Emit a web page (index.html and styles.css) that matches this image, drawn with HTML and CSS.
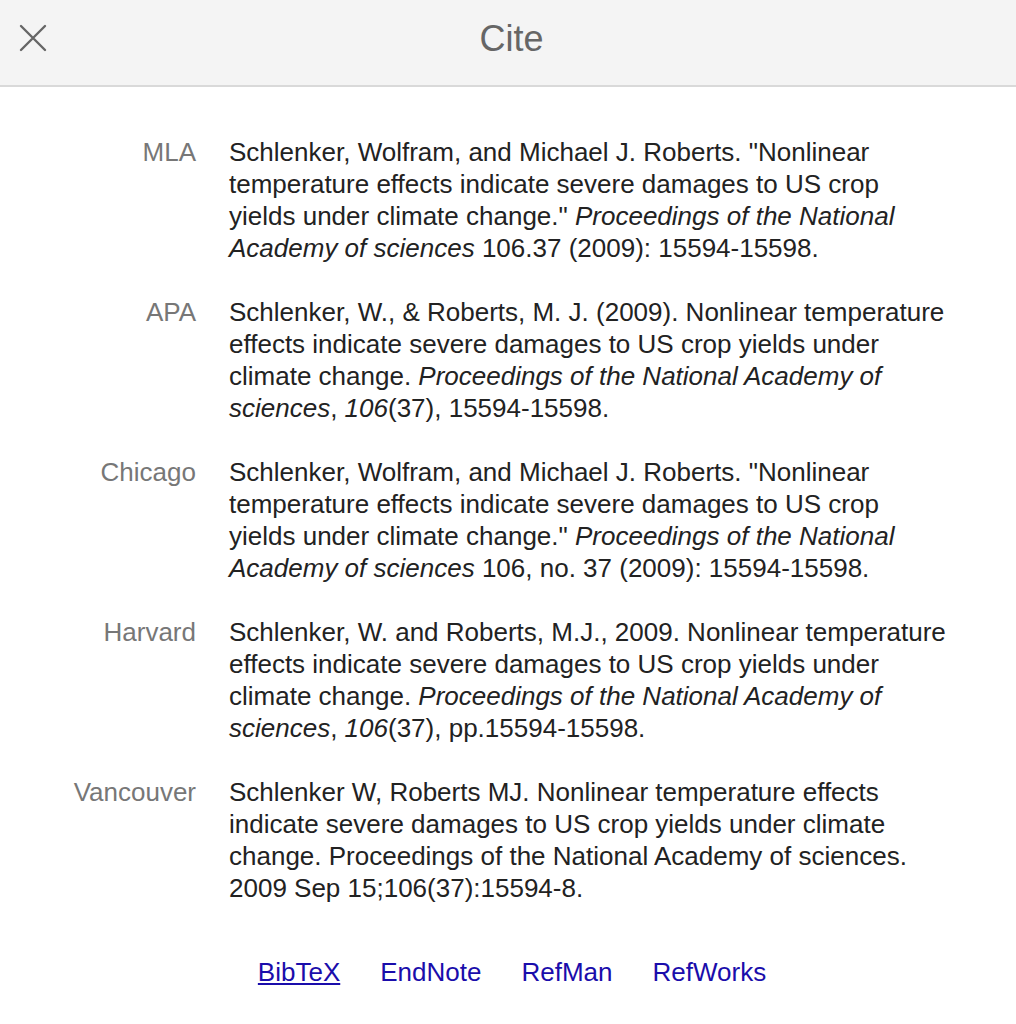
FILE: index.html
```html
<!DOCTYPE html>
<html>
<head>
<meta charset="utf-8">
<link rel="stylesheet" href="styles.css">
</head>
<body>
<div class="dialog">
  <header class="head">
    <button class="close" aria-label="Close">
      <svg width="28" height="28" viewBox="0 0 28 28"><path d="M2 2 L26 26 M26 2 L2 26" stroke="#666" stroke-width="2.4" stroke-linecap="round" fill="none"/></svg>
    </button>
    <h1 class="title">Cite</h1>
  </header>
  <div class="body">
    <div class="cites">
      <div class="lbl">MLA</div>
      <div class="txt">Schlenker, Wolfram, and Michael J. Roberts. "Nonlinear temperature effects indicate severe damages to US crop yields under climate change." <i>Proceedings of the National Academy of sciences</i> 106.37 (2009): 15594-15598.</div>
      <div class="lbl">APA</div>
      <div class="txt">Schlenker, W., &amp; Roberts, M. J. (2009). Nonlinear temperature effects indicate severe damages to US crop yields under climate change. <i>Proceedings of the National Academy of sciences</i>, <i>106</i>(37), 15594-15598.</div>
      <div class="lbl">Chicago</div>
      <div class="txt">Schlenker, Wolfram, and Michael J. Roberts. "Nonlinear temperature effects indicate severe damages to US crop yields under climate change." <i>Proceedings of the National Academy of sciences</i> 106, no. 37 (2009): 15594-15598.</div>
      <div class="lbl">Harvard</div>
      <div class="txt">Schlenker, W. and Roberts, M.J., 2009. Nonlinear temperature effects indicate severe damages to US crop yields under climate change. <i>Proceedings of the National Academy of sciences</i>, <i>106</i>(37), pp.15594-15598.</div>
      <div class="lbl">Vancouver</div>
      <div class="txt">Schlenker W, Roberts MJ. Nonlinear temperature effects indicate severe damages to US crop yields under climate change. Proceedings of the National Academy of sciences. 2009 Sep 15;106(37):15594-8.</div>
    </div>
    <div class="links">
      <a href="#" class="active">BibTeX</a>
      <a href="#">EndNote</a>
      <a href="#">RefMan</a>
      <a href="#">RefWorks</a>
    </div>
  </div>
</div>
</body>
</html>
```

FILE: styles.css
```css
html, body {
  margin: 0;
  padding: 0;
  background: #fff;
}
body {
  font-family: Arial, "Liberation Sans", sans-serif;
  color: #222;
}
.head {
  position: relative;
  height: 85px;
  background: #f4f4f4;
  border-bottom: 2px solid #d9d9d9;
  display: flex;
  align-items: center;
  justify-content: center;
}
.close {
  position: absolute;
  left: 19px;
  top: 24px;
  width: 28px;
  height: 28px;
  padding: 0;
  border: 0;
  background: none;
  display: block;
}
.close svg { display: block; }
.title {
  margin: 0;
  font-size: 36px;
  font-weight: normal;
  color: #666;
  line-height: 1;
  padding: 0 0 8px 7px;
}
.body {
  padding: 49px 68px 40px 0;
}
.cites {
  display: grid;
  grid-template-columns: 196px 1fr;
  column-gap: 33px;
  row-gap: 32px;
  font-size: 26px;
  line-height: 32px;
}
.lbl {
  text-align: right;
  color: #777;
}
.txt {
  color: #222;
}
.links {
  display: flex;
  justify-content: center;
  gap: 40px;
  margin-top: 52px;
  padding-left: 76px;
  font-size: 26px;
  line-height: 32px;
}
.links a {
  color: #1a0dab;
  text-decoration: none;
}
.links a.active {
  text-decoration: underline;
}
```
